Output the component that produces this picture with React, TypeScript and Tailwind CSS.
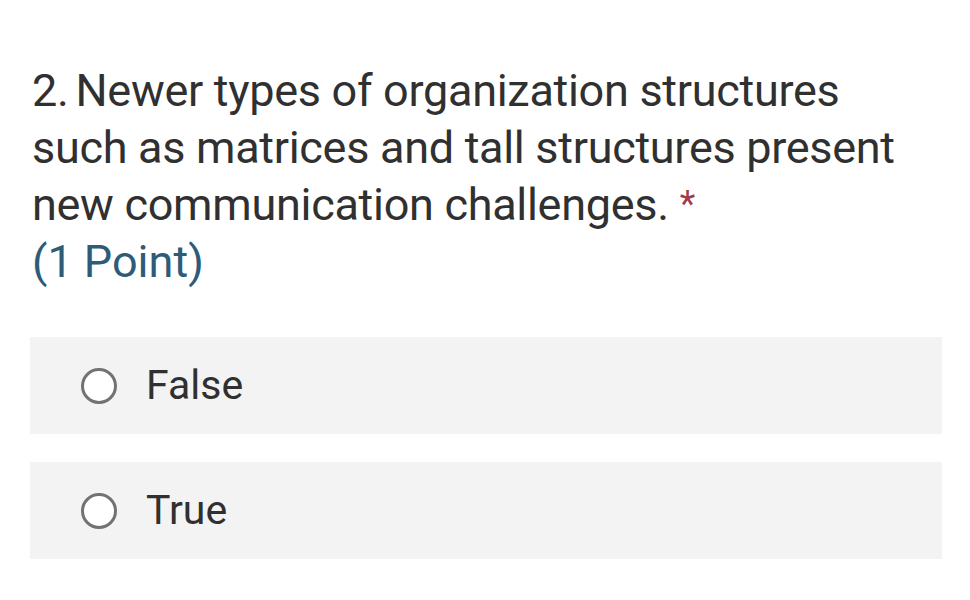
import React from 'react';

const options = ['False', 'True'];

const App = () => {
  return (
    <div className="w-[970px] h-[600px] bg-white pl-[30px] pr-[28px] pt-[62px]" style={{ fontFamily: 'Roboto, "Liberation Sans", sans-serif' }}>
      {/* Question */}
      <div className="pl-[2px] text-[45px] leading-[57px] text-[#303030] tracking-[-0.3px]">
        <p>
          2.<span className="ml-[7px]">Newer types of organization structures</span>
          <br />
          such as matrices and tall structures present
          <br />
          new communication challenges.{' '}
          <span className="text-[#a33a4a] text-[36px] align-top">*</span>
        </p>
        <p className="text-[#2e5b78] tracking-[0px]">(1 Point)</p>
      </div>

      {/* Options */}
      <div className="mt-[47px] flex flex-col gap-[28px]">
        {options.map((option) => (
          <div key={option} className="h-[97px] bg-[#f3f3f3] flex items-center pl-[51px] gap-[29px]">
            <span className="w-[36px] h-[36px] rounded-full border-[3px] border-[#727272] bg-white" />
            <span className="text-[41px] text-[#303030]">{option}</span>
          </div>
        ))}
      </div>
    </div>
  );
};

export default App;
